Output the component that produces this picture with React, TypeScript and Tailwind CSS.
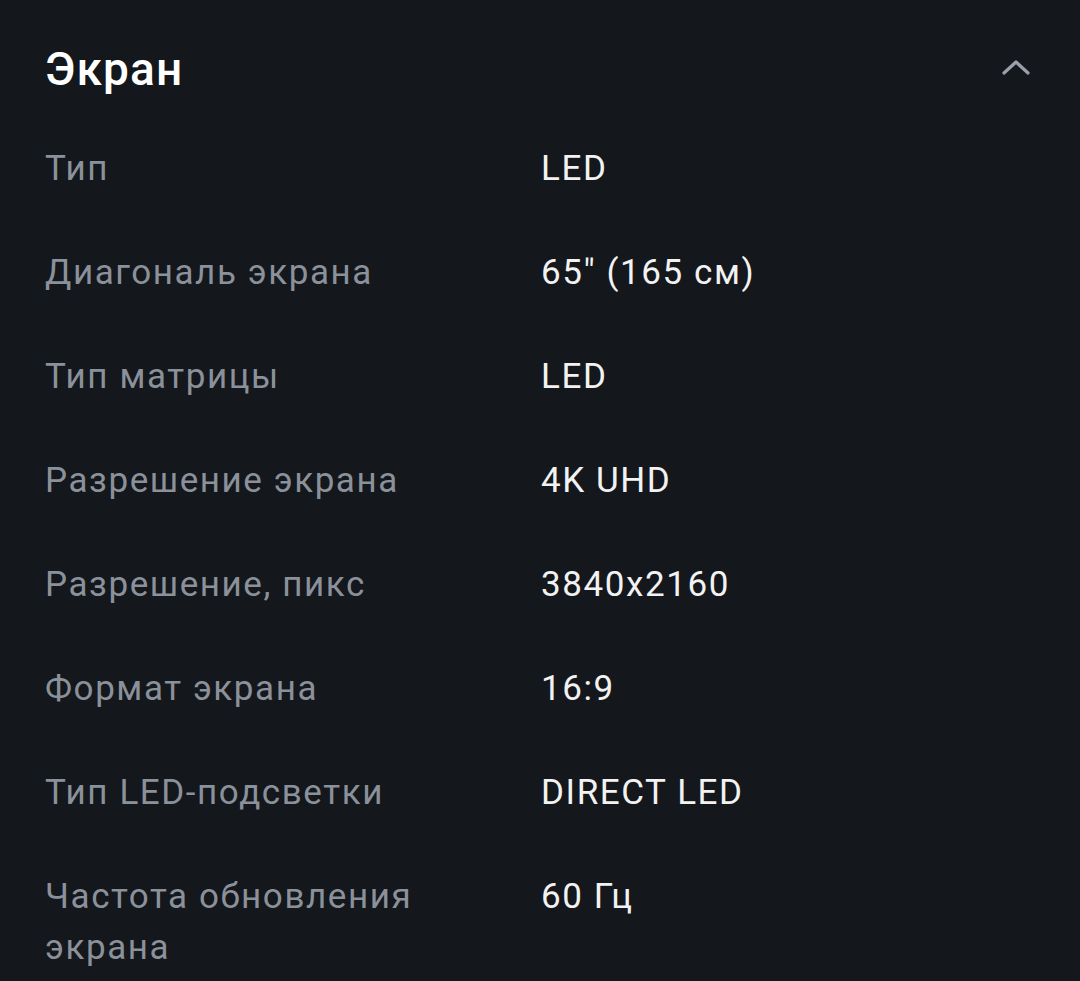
import React from "react"

const specs = [
  { label: "Тип", value: "LED" },
  { label: "Диагональ экрана", value: "65\" (165 см)" },
  { label: "Тип матрицы", value: "LED" },
  { label: "Разрешение экрана", value: "4K UHD" },
  { label: "Разрешение, пикс", value: "3840x2160" },
  { label: "Формат экрана", value: "16:9" },
  { label: "Тип LED-подсветки", value: "DIRECT LED" },
  { label: "Частота обновления экрана", value: "60 Гц" },
]

function ChevronUp() {
  return (
    <svg width="30" height="20" viewBox="0 0 30 20" fill="none" className="text-[#9ba0a8]">
      <path d="M3 16 L15 5 L27 16" stroke="currentColor" strokeWidth="3.2" strokeLinecap="round" strokeLinejoin="round" />
    </svg>
  )
}

export default function App() {
  return (
    <div className="min-h-[981px] w-[1080px] overflow-hidden bg-[#14171c] px-[45px] pt-[22px] font-['Roboto','Noto_Sans',sans-serif]">
      <div className="flex h-[94px] items-center justify-between">
        <h2 className="text-[46px] font-medium tracking-[0.025em] text-white">Экран</h2>
        <div className="mb-[4px] mr-[4px] flex items-center">
          <ChevronUp />
        </div>
      </div>

      <div className="flex flex-col">
        {specs.map((s) => (
          <div key={s.label} className="grid grid-cols-[496px_1fr] pb-[26px] pt-[27px] text-[35px] leading-[51px] tracking-[0.045em]">
            <div className="pr-[60px] text-[#8b919a]">{s.label}</div>
            <div className="text-[#f2f2f2]">{s.value}</div>
          </div>
        ))}
      </div>
    </div>
  )
}
